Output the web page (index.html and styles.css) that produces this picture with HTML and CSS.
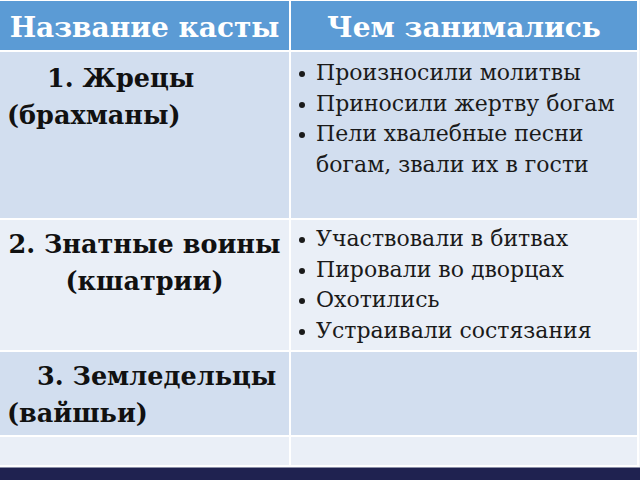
FILE: index.html
```html
<!DOCTYPE html>
<html lang="ru">
<head>
<meta charset="utf-8">
<title>Касты</title>
<link rel="stylesheet" href="styles.css">
</head>
<body>
<div class="slide">
  <table class="castes">
    <thead>
      <tr>
        <th class="col-name">Название касты</th>
        <th class="col-work">Чем занимались</th>
      </tr>
    </thead>
    <tbody>
      <tr class="row-odd row-1">
        <td class="caste caste-1"><p>1. Жрецы<br>(брахманы)</p></td>
        <td class="work">
          <ul>
            <li>Произносили молитвы</li>
            <li>Приносили жертву богам</li>
            <li>Пели хвалебные песни богам, звали их в гости</li>
          </ul>
        </td>
      </tr>
      <tr class="row-even row-2">
        <td class="caste caste-2"><p>2. Знатные воины<br>(кшатрии)</p></td>
        <td class="work">
          <ul>
            <li>Участвовали в битвах</li>
            <li>Пировали во дворцах</li>
            <li>Охотились</li>
            <li>Устраивали состязания</li>
          </ul>
        </td>
      </tr>
      <tr class="row-odd row-3">
        <td class="caste caste-3"><p>3. Земледельцы<br>(вайшьи)</p></td>
        <td class="work"></td>
      </tr>
      <tr class="row-even row-4">
        <td class="caste"></td>
        <td class="work"></td>
      </tr>
    </tbody>
  </table>
  <div class="bar"></div>
</div>
</body>
</html>
```

FILE: styles.css
```css
html, body {
  margin: 0;
  padding: 0;
  background: #f3f5f9;
}

.slide {
  width: 640px;
  height: 480px;
  overflow: hidden;
  display: flex;
  flex-direction: column;
}

.castes {
  border-collapse: separate;
  border-spacing: 2px;
  background: #ffffff;
  margin: -1px 0 0 -2px;
  width: 641px;
  table-layout: fixed;
  font-family: "DejaVu Serif", "Liberation Serif", serif;
  flex: none;
}

.castes th,
.castes td {
  padding: 0;
  vertical-align: top;
}

.col-name { width: 289px; }
.col-work { width: 346px; }

.castes thead th {
  height: 45px;
  padding-top: 4px;
  background: #5b9bd5;
  color: #ffffff;
  font-weight: bold;
  font-size: 28px;
  line-height: 45px;
  text-align: center;
  white-space: nowrap;
}

.row-odd td { background: #d2deef; }
.row-even td { background: #eaeff7; }

.row-1 td { height: 166px; }
.row-2 td { height: 130px; }
.row-3 td { height: 83px; }
.row-4 td { height: 28px; }

.caste p {
  margin: 0;
  padding: 0 0 0 7px;
  font-weight: bold;
  font-size: 25.5px;
  line-height: 37px;
  color: #111111;
}

.caste-1 p { padding-top: 8px; text-indent: 40px; }
.caste-2 p { padding: 6px 0 0 0; text-align: center; }
.caste-3 p { padding-top: 6px; text-indent: 30px; }

.work ul {
  list-style: none;
  margin: 0;
  padding: 6px 0 0 8px;
  font-size: 22px;
  line-height: 30.7px;
  color: #1a1a1a;
}

.row-2 .work ul { padding-top: 4px; }

.work li {
  display: grid;
  grid-template-columns: 17px 1fr;
  align-items: start;
}

.work li::before {
  content: "";
  width: 6px;
  height: 6px;
  margin-top: 13px;
  border-radius: 50%;
  background: #1a1a1a;
}

.bar {
  flex: 1;
  background: #1f2250;
  border-top: 1px solid #8c90a8;
}
```
